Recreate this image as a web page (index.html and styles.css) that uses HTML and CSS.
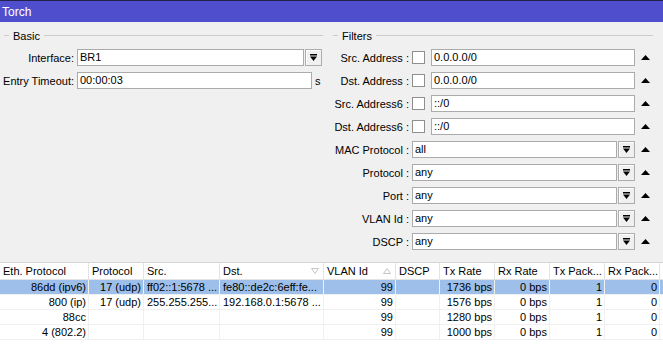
FILE: index.html
```html
<!doctype html>
<html>
<head>
    <title>Torch</title>
    <meta charset="utf-8"/>
    <link rel="stylesheet" href="styles.css">
</head>
<body>
    <div class="titlebar">Torch</div>

    <div class="panels">
        <!-- left group -->
        <div class="group basic">
            <div class="legend"><span class="tick"></span><span class="legend-text">Basic</span><span class="rule"></span></div>
            <div class="rows">
                <div class="row">
                    <span class="label">Interface:</span>
                    <span class="field w-iface">BR1</span>
                    <span class="drop"><svg width="7" height="7" viewBox="0 0 7 7"><rect x="0" y="0" width="7" height="1.5" fill="#000"/><polygon points="0,2.5 7,2.5 3.5,7" fill="#000"/></svg></span>
                </div>
                <div class="row">
                    <span class="label">Entry Timeout:</span>
                    <span class="field w-timeout">00:00:03</span>
                    <span class="unit">s</span>
                </div>
            </div>
        </div>

        <!-- right group -->
        <div class="group filters">
            <div class="legend"><span class="tick"></span><span class="legend-text">Filters</span><span class="rule"></span></div>
            <div class="rows">
                <div class="row">
                    <span class="label">Src. Address :</span>
                    <span class="check"></span>
                    <span class="field w-addr">0.0.0.0/0</span>
                    <span class="up"><svg width="9" height="5" viewBox="0 0 9 5"><polygon points="0,5 9,5 4.5,0" fill="#000"/></svg></span>
                </div>
                <div class="row">
                    <span class="label">Dst. Address :</span>
                    <span class="check"></span>
                    <span class="field w-addr">0.0.0.0/0</span>
                    <span class="up"><svg width="9" height="5" viewBox="0 0 9 5"><polygon points="0,5 9,5 4.5,0" fill="#000"/></svg></span>
                </div>
                <div class="row">
                    <span class="label">Src. Address6 :</span>
                    <span class="check"></span>
                    <span class="field w-addr">::/0</span>
                    <span class="up"><svg width="9" height="5" viewBox="0 0 9 5"><polygon points="0,5 9,5 4.5,0" fill="#000"/></svg></span>
                </div>
                <div class="row">
                    <span class="label">Dst. Address6 :</span>
                    <span class="check"></span>
                    <span class="field w-addr">::/0</span>
                    <span class="up"><svg width="9" height="5" viewBox="0 0 9 5"><polygon points="0,5 9,5 4.5,0" fill="#000"/></svg></span>
                </div>
                <div class="row">
                    <span class="label">MAC Protocol :</span>
                    <span class="field w-select">all</span>
                    <span class="drop"><svg width="7" height="7" viewBox="0 0 7 7"><rect x="0" y="0" width="7" height="1.5" fill="#000"/><polygon points="0,2.5 7,2.5 3.5,7" fill="#000"/></svg></span>
                    <span class="up"><svg width="9" height="5" viewBox="0 0 9 5"><polygon points="0,5 9,5 4.5,0" fill="#000"/></svg></span>
                </div>
                <div class="row">
                    <span class="label">Protocol :</span>
                    <span class="field w-select">any</span>
                    <span class="drop"><svg width="7" height="7" viewBox="0 0 7 7"><rect x="0" y="0" width="7" height="1.5" fill="#000"/><polygon points="0,2.5 7,2.5 3.5,7" fill="#000"/></svg></span>
                    <span class="up"><svg width="9" height="5" viewBox="0 0 9 5"><polygon points="0,5 9,5 4.5,0" fill="#000"/></svg></span>
                </div>
                <div class="row">
                    <span class="label">Port :</span>
                    <span class="field w-select">any</span>
                    <span class="drop"><svg width="7" height="7" viewBox="0 0 7 7"><rect x="0" y="0" width="7" height="1.5" fill="#000"/><polygon points="0,2.5 7,2.5 3.5,7" fill="#000"/></svg></span>
                    <span class="up"><svg width="9" height="5" viewBox="0 0 9 5"><polygon points="0,5 9,5 4.5,0" fill="#000"/></svg></span>
                </div>
                <div class="row">
                    <span class="label">VLAN Id :</span>
                    <span class="field w-select">any</span>
                    <span class="drop"><svg width="7" height="7" viewBox="0 0 7 7"><rect x="0" y="0" width="7" height="1.5" fill="#000"/><polygon points="0,2.5 7,2.5 3.5,7" fill="#000"/></svg></span>
                    <span class="up"><svg width="9" height="5" viewBox="0 0 9 5"><polygon points="0,5 9,5 4.5,0" fill="#000"/></svg></span>
                </div>
                <div class="row">
                    <span class="label">DSCP :</span>
                    <span class="field w-select">any</span>
                    <span class="drop"><svg width="7" height="7" viewBox="0 0 7 7"><rect x="0" y="0" width="7" height="1.5" fill="#000"/><polygon points="0,2.5 7,2.5 3.5,7" fill="#000"/></svg></span>
                    <span class="up"><svg width="9" height="5" viewBox="0 0 9 5"><polygon points="0,5 9,5 4.5,0" fill="#000"/></svg></span>
                </div>
            </div>
        </div>
    </div>

    <!-- traffic list -->
    <div class="list">
        <div class="thead">
            <div class="th">Eth. Protocol</div>
            <div class="th">Protocol</div>
            <div class="th">Src.</div>
            <div class="th sort">Dst.<svg width="8" height="6" viewBox="0 0 8 6"><polygon points="0.5,0.5 7.5,0.5 4,5.5" fill="none" stroke="#c4c4c4"/></svg></div>
            <div class="th sort">VLAN Id<svg width="8" height="6" viewBox="0 0 8 6"><polygon points="0.5,5.5 7.5,5.5 4,0.5" fill="none" stroke="#c4c4c4"/></svg></div>
            <div class="th">DSCP</div>
            <div class="th">Tx Rate</div>
            <div class="th">Rx Rate</div>
            <div class="th">Tx Pack...</div>
            <div class="th">Rx Pack...</div>
            <div class="th"></div>
        </div>
        <div class="tr selected">
            <div class="td r">86dd (ipv6)</div>
            <div class="td r">17 (udp)</div>
            <div class="td">ff02::1:5678 ...</div>
            <div class="td">fe80::de2c:6eff:fe...</div>
            <div class="td r">99</div>
            <div class="td"></div>
            <div class="td r">1736 bps</div>
            <div class="td r">0 bps</div>
            <div class="td r">1</div>
            <div class="td r">0</div>
            <div class="td"></div>
        </div>
        <div class="tr">
            <div class="td r">800 (ip)</div>
            <div class="td r">17 (udp)</div>
            <div class="td">255.255.255...</div>
            <div class="td">192.168.0.1:5678 ...</div>
            <div class="td r">99</div>
            <div class="td"></div>
            <div class="td r">1576 bps</div>
            <div class="td r">0 bps</div>
            <div class="td r">1</div>
            <div class="td r">0</div>
            <div class="td"></div>
        </div>
        <div class="tr">
            <div class="td r">88cc</div>
            <div class="td"></div>
            <div class="td"></div>
            <div class="td"></div>
            <div class="td r">99</div>
            <div class="td"></div>
            <div class="td r">1280 bps</div>
            <div class="td r">0 bps</div>
            <div class="td r">1</div>
            <div class="td r">0</div>
            <div class="td"></div>
        </div>
        <div class="tr">
            <div class="td r">4 (802.2)</div>
            <div class="td"></div>
            <div class="td"></div>
            <div class="td"></div>
            <div class="td r">99</div>
            <div class="td"></div>
            <div class="td r">1000 bps</div>
            <div class="td r">0 bps</div>
            <div class="td r">1</div>
            <div class="td r">0</div>
            <div class="td"></div>
        </div>
    </div>
</body>
</html>
```

FILE: styles.css
```css
body {
    margin: 0;
    width: 663px;
    height: 348px;
    overflow: hidden;
    background-color: #f0f0f0;
    font-family: "Liberation Sans", Arial, sans-serif;
    font-size: 11px;
    color: #000;
}
.titlebar {
    height: 19px;
    line-height: 19px;
    padding-top: 2px;
    border-top: 1px solid #22224a;
    background-color: #4f4fcd;
    color: white;
    font-size: 12px;
    padding-left: 2px;
}
.panels {
    display: flex;
    height: 240px;
}
.basic {
    width: 330px;
}
.filters {
    width: 333px;
}
.legend {
    display: flex;
    align-items: center;
    height: 13px;
    margin-top: 7px;
}
.basic .legend {
    padding: 0 7px 0 4px;
}
.filters .legend {
    padding: 0 10px 0 3px;
}
.tick {
    width: 5px;
    border-top: 1px solid #cdcdcd;
}
.legend-text {
    padding: 0 4px;
}
.rule {
    flex: 1;
    border-top: 1px solid #cdcdcd;
}
.rows {
    display: flex;
    flex-direction: column;
    gap: 6px;
    margin-top: 7px;
}
.row {
    display: flex;
    align-items: center;
    height: 17px;
}
.label {
    flex: none;
    text-align: right;
    white-space: nowrap;
    margin-right: 3px;
}
.basic .label {
    width: 74px;
}
.filters .label {
    width: 79px;
}
.field {
    flex: none;
    box-sizing: border-box;
    height: 17px;
    line-height: 15px;
    border: 1px solid #ababab;
    background-color: white;
    padding-left: 2px;
    white-space: nowrap;
    overflow: hidden;
}
.w-iface {
    width: 227px;
}
.w-timeout {
    width: 235px;
}
.w-addr {
    width: 204px;
}
.w-select {
    width: 205px;
}
.drop {
    flex: none;
    box-sizing: border-box;
    width: 17px;
    height: 17px;
    margin-left: 1px;
    border: 1px solid #adadad;
    background-color: #f0f0f0;
    box-shadow: inset 1px 1px 0 #fff;
    display: flex;
    align-items: center;
    justify-content: center;
}
.drop svg, .up svg {
    display: block;
}
.check {
    flex: none;
    box-sizing: border-box;
    width: 13px;
    height: 13px;
    border: 1px solid #8f8f8f;
    background-color: white;
    margin-right: 6px;
}
.unit {
    margin-left: 3px;
}
.up {
    margin-left: 6px;
}
.list {
    background-color: white;
    height: 86px;
}
.thead, .tr {
    display: grid;
    grid-template-columns: 89px 55px 76px 104px 72px 44px 55px 55px 55px 55px 3px;
}
.thead {
    border-top: 1px solid #d5d5d5;
}
.th, .td {
    box-sizing: border-box;
    padding: 0 2px 0 3px;
    white-space: nowrap;
    overflow: hidden;
}
.th {
    height: 17px;
    line-height: 16px;
    border-right: 1px solid #e3e3e3;
    border-bottom: 1px solid #e3e3e3;
}
.sort {
    display: flex;
    align-items: center;
    justify-content: space-between;
    padding-right: 4px;
}
.td {
    height: 15px;
    line-height: 14px;
    border-right: 1px solid #f0f0f0;
    border-bottom: 1px solid #f0f0f0;
}
.r {
    text-align: right;
}
.selected .td {
    background-color: #9dbfea;
}
```
